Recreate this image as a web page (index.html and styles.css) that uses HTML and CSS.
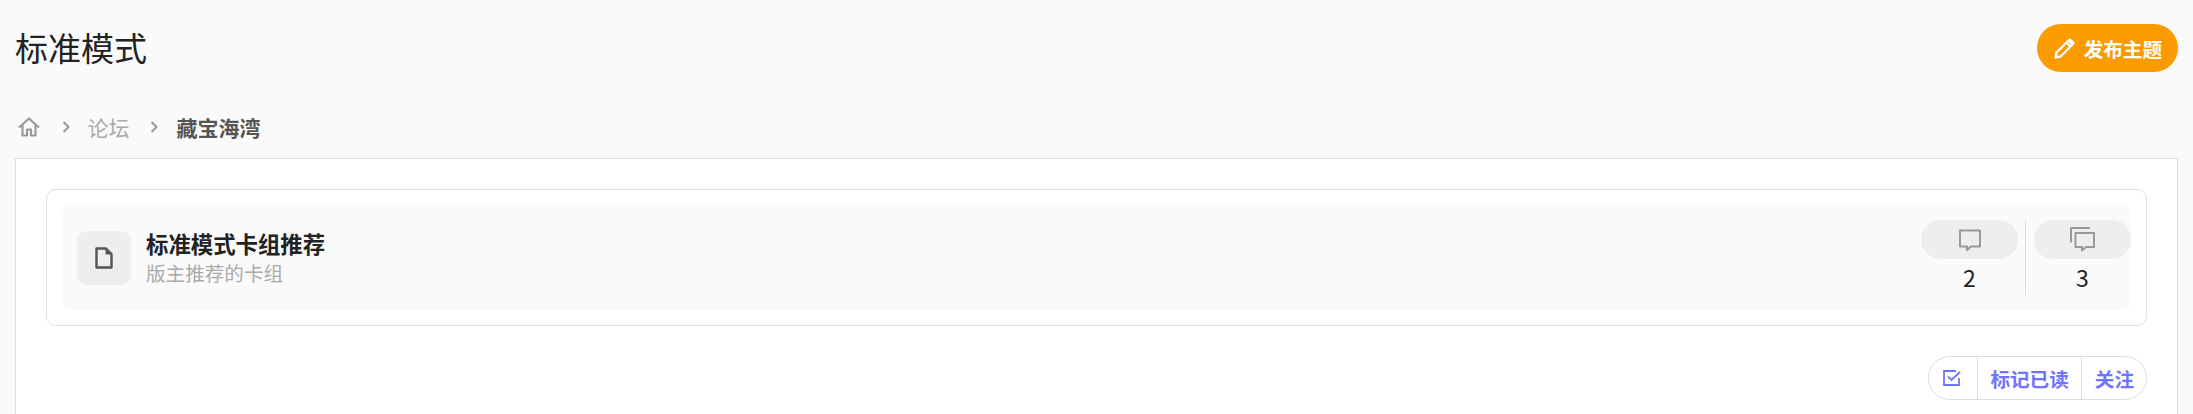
FILE: index.html
```html
<!DOCTYPE html>
<html lang="zh-CN">
<head>
    <meta charset="UTF-8">
    <meta name="viewport" content="width=device-width, initial-scale=1.0">
    <title>标准模式</title>
    <link rel="stylesheet" href="styles.css">
</head>
<body>
    <div class="page-head">
        <h1>标准模式</h1>
        <a href="#" class="btn-post">
            <svg class="icon-pencil" viewBox="0 0 21 21" fill="none" stroke="#fff" stroke-width="2.4" stroke-linejoin="round">
                <path d="M1.500 19.500l1-5L14.500 2.500l4 4L6.500 18.500z"/>
                <path d="M15 2l1-1 4 4-1 1z" fill="#fff" stroke-width="1.500"/>
                <path d="M12.500 4.500l4 4"/>
            </svg>
            <span>发布主题</span>
        </a>
    </div>

    <div class="breadcrumb">
        <svg class="icon-home" viewBox="0 0 22 20" fill="none" stroke="#999" stroke-width="2.2" stroke-linejoin="round">
            <path d="M1 10.500L11 1.500l10 9"/>
            <path d="M4.500 8v10.500h4.500v-6h4v6h4.500V8"/>
        </svg>
        <svg class="icon-chevron" viewBox="0 0 8 12" fill="none" stroke="#999" stroke-width="2"><path d="M1.500 1l5 5-5 5"/></svg>
        <a href="#" class="crumb">论坛</a>
        <svg class="icon-chevron" viewBox="0 0 8 12" fill="none" stroke="#999" stroke-width="2"><path d="M1.500 1l5 5-5 5"/></svg>
        <span class="crumb-current">藏宝海湾</span>
    </div>

    <div class="panel">
        <div class="forum-card">
            <div class="forum-row">
                <div class="forum-icon">
                    <svg viewBox="0 0 18 22" fill="none" stroke="#555" stroke-width="2.4" stroke-linejoin="round">
                        <path d="M1.500 1.500h9.500l5.500 5.500v13.500h-15z"/>
                        <path d="M11 2v5h5z" fill="#555" stroke-width="1"/>
                    </svg>
                </div>
                <div class="forum-text">
                    <div class="forum-title">标准模式卡组推荐</div>
                    <div class="forum-sub">版主推荐的卡组</div>
                </div>
                <div class="forum-stats">
                    <div class="stat">
                        <div class="stat-pill">
                            <svg class="icon-comment" viewBox="0 0 22 22" fill="none" stroke="#999" stroke-width="2" stroke-linejoin="round">
                                <path d="M1 1.500h20v16h-9l-4 3.500v-3.500H1z"/>
                            </svg>
                        </div>
                        <div class="stat-num">2</div>
                    </div>
                    <div class="stat stat-last">
                        <div class="stat-pill">
                            <svg class="icon-comments" viewBox="0 0 25 25" fill="none" stroke="#999" stroke-width="2" stroke-linejoin="round">
                                <path d="M1 15.500V1h19"/>
                                <path d="M5.500 6h18.500v14h-8l-4 3.500V20H5.500z"/>
                            </svg>
                        </div>
                        <div class="stat-num">3</div>
                    </div>
                </div>
            </div>
        </div>

        <div class="actions">
            <div class="btn-group">
                <a href="#" class="btn-item btn-check">
                    <svg viewBox="0 0 18 16" fill="none" stroke="#6f73ff" stroke-width="1.800">
                        <path d="M16 8v7H1V1h12"/>
                        <path d="M5 6.500l3.500 3.500L17 2"/>
                    </svg>
                </a>
                <a href="#" class="btn-item">标记已读</a>
                <a href="#" class="btn-item btn-follow">关注</a>
            </div>
        </div>
    </div>
</body>
</html>
```

FILE: styles.css
```css
* {
    box-sizing: border-box;
    margin: 0;
    padding: 0;
}
html, body {
    height: 100%;
}
body {
    font-family: "Noto Sans CJK SC", "Noto Sans", sans-serif;
    background-color: #fafafa;
    color: #222;
    display: flex;
    flex-direction: column;
    padding: 0 15px;
    overflow: hidden;
}
a {
    text-decoration: none;
}
.page-head {
    display: flex;
    justify-content: space-between;
    align-items: center;
    padding-top: 24px;
    height: 72px;
}
h1 {
    font-size: 33px;
    font-weight: 400;
    line-height: 48px;
    margin-bottom: 3px;
}
.btn-post {
    display: flex;
    align-items: center;
    gap: 9px;
    height: 48px;
    padding: 0 16px 0 17px;
    background: #fb9b00;
    color: #fff;
    font-size: 19.6px;
    font-weight: 700;
    border-radius: 24px;
}
.icon-pencil {
    width: 21px;
    height: 21px;
}
.breadcrumb {
    display: flex;
    align-items: center;
    height: 86px;
    padding: 23px 0 0 2.500px;
}
.icon-home {
    width: 22px;
    height: 20px;
    margin-right: 22px;
}
.icon-chevron {
    width: 8px;
    height: 12px;
}
.crumb {
    font-size: 21px;
    color: #aaa;
    margin: 0 20px 0 18px;
}
.crumb-current {
    font-size: 21px;
    font-weight: 700;
    color: #555;
    margin-left: 19px;
}
.panel {
    flex: 1;
    background: #fff;
    border: 1px solid #e0e0e0;
    border-bottom: none;
    padding: 30px 30px 0;
}
.forum-card {
    border: 1px solid #e0e0e0;
    border-radius: 10px;
    padding: 15px;
}
.forum-row {
    display: flex;
    align-items: center;
    height: 105px;
    padding-left: 15px;
    background: #fafafa;
    border-radius: 10px;
}
.forum-icon {
    width: 54px;
    height: 54px;
    background: #eee;
    border-radius: 10px;
    display: flex;
    align-items: center;
    justify-content: center;
}
.forum-icon svg {
    width: 18px;
    height: 22px;
}
.forum-text {
    flex: 1;
    margin-left: 15px;
}
.forum-title {
    font-size: 22.4px;
    font-weight: 700;
    line-height: 30px;
}
.forum-sub {
    font-size: 19.6px;
    color: #aaa;
    line-height: 28px;
    margin-top: 1px;
}
.forum-stats {
    display: flex;
    align-self: flex-start;
    margin-top: 15px;
}
.stat {
    width: 105px;
    height: 75px;
    padding-right: 7px;
    border-right: 1px solid #ddd;
    text-align: center;
}
.stat-last {
    padding: 0 0 0 8px;
    border-right: none;
}
.stat-pill {
    height: 39px;
    background: #eee;
    border-radius: 20px;
    display: flex;
    align-items: center;
    justify-content: center;
}
.icon-comment {
    width: 22px;
    height: 22px;
}
.icon-comments {
    width: 25px;
    height: 25px;
}
.stat-num {
    font-size: 23px;
    line-height: 36px;
}
.actions {
    display: flex;
    justify-content: flex-end;
    margin-top: 30px;
}
.btn-group {
    display: flex;
    height: 44px;
    border: 1px solid #ddd;
    border-radius: 22px;
}
.btn-item {
    display: flex;
    align-items: center;
    padding: 0 12.500px;
    font-size: 19.6px;
    font-weight: 700;
    color: #6f73ff;
    border-left: 1px solid #ddd;
}
.btn-check {
    border-left: none;
    padding: 0 16px 0 14px;
}
.btn-check svg {
    width: 18px;
    height: 16px;
}
.btn-follow {
    padding-right: 12px;
}
```
